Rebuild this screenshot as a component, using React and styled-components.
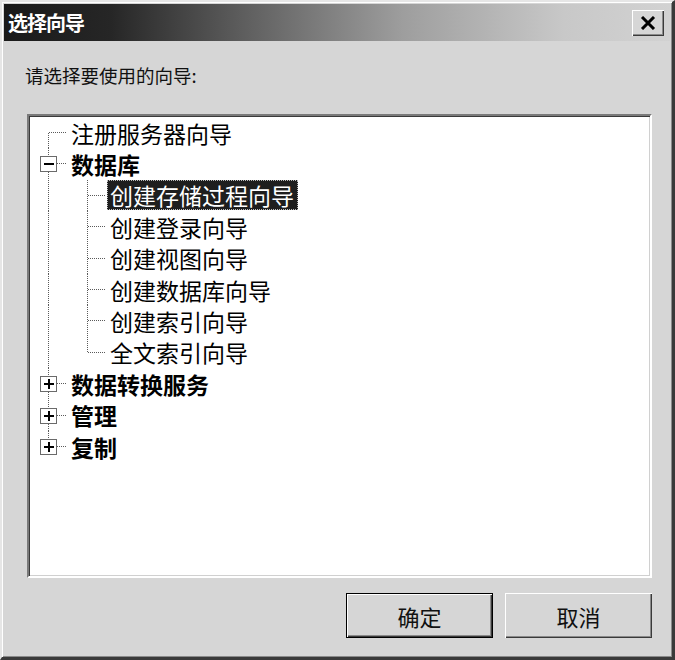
import React from 'react';
import styled, { createGlobalStyle } from 'styled-components';

const ROW_H = 31.4;
const MID = 15.7;

const treeRows = [
  { label: '注册服务器向导', cells: ['first'] },
  { label: '数据库', bold: true, cells: ['tee'], box: 'minus' },
  { label: '创建存储过程向导', cells: ['pipe', 'tee'], selected: true },
  { label: '创建登录向导', cells: ['pipe', 'tee'] },
  { label: '创建视图向导', cells: ['pipe', 'tee'] },
  { label: '创建数据库向导', cells: ['pipe', 'tee'] },
  { label: '创建索引向导', cells: ['pipe', 'tee'] },
  { label: '全文索引向导', cells: ['pipe', 'ell'] },
  { label: '数据转换服务', bold: true, cells: ['tee'], box: 'plus' },
  { label: '管理', bold: true, cells: ['tee'], box: 'plus' },
  { label: '复制', bold: true, cells: ['ell'], box: 'plus' },
];

const Connector = ({ kind, box }) => {
  const top = kind === 'first' ? MID : 0;
  const bottom = kind === 'ell' ? MID : ROW_H;
  return (
    <Gutter width="39" height={ROW_H} shapeRendering="crispEdges">
      <line x1="19.5" x2="19.5" y1={top} y2={bottom} stroke="#5a5a5a" strokeDasharray="1 1" />
      {kind !== 'pipe' && (
        <line x1="20" x2="38" y1={MID} y2={MID} stroke="#5a5a5a" strokeDasharray="1 1" />
      )}
      {box && (
        <g>
          <rect x="11.5" y={MID - 7.5} width="16" height="15" fill="#fff" stroke="#6a6a6a" strokeWidth="1.4" />
          <line x1="14.5" x2="24.5" y1={MID} y2={MID} stroke="#000" strokeWidth="2" />
          {box === 'plus' && (
            <line x1="19.5" x2="19.5" y1={MID - 5} y2={MID + 5} stroke="#000" strokeWidth="2" />
          )}
        </g>
      )}
    </Gutter>
  );
};

const App = () => {
  return (
    <>
      <GlobalStyle />
      <Window>
        <TitleBar>
          <Title>选择向导</Title>
          <CloseButton aria-label="关闭">
            <svg width="16" height="14" viewBox="0 0 16 14">
              <path d="M2 1 L14 13 M14 1 L2 13" stroke="#000" strokeWidth="3" />
            </svg>
          </CloseButton>
        </TitleBar>
        <Body>
          <Prompt>请选择要使用的向导:</Prompt>
          <TreeBox>
            {treeRows.map((row) => (
              <Row key={row.label}>
                {row.cells.map((c, i) => (
                  <Connector key={i} kind={c} box={i === 0 ? row.box : undefined} />
                ))}
                <Label $bold={row.bold} $selected={row.selected}>{row.label}</Label>
              </Row>
            ))}
          </TreeBox>
          <Footer>
            <Button $default>确定</Button>
            <Button>取消</Button>
          </Footer>
        </Body>
      </Window>
    </>
  );
};

export default App;

const GlobalStyle = createGlobalStyle`
  html, body {
    margin: 0;
    padding: 0;
    background: #d6d6d6;
  }
  body {
    font-family: "Noto Sans CJK SC", "Noto Sans", sans-serif;
  }
`;

const Window = styled.div`
  box-sizing: border-box;
  width: 675px;
  height: 660px;
  padding: 2px;
  background: #d6d6d6;
  border-style: solid;
  border-width: 2px 3px 3px 2px;
  border-color: #e6e6e6 #3a3a3a #3a3a3a #e6e6e6;
  box-shadow: inset 1px 1px 0 #ffffff, inset -1px -1px 0 #8a8a8a;
  display: flex;
  flex-direction: column;
`;

const TitleBar = styled.div`
  height: 37px;
  display: flex;
  align-items: center;
  justify-content: space-between;
  padding: 0 6px 0 4px;
  background: linear-gradient(
    to right,
    #1a1a1a 0%,
    #262626 16%,
    #5e5e5e 36%,
    #9e9e9e 60%,
    #c8c8c8 84%,
    #d2d2d2 100%
  );
`;

const Title = styled.span`
  color: #fff;
  font-size: 20px;
  font-weight: 700;
  letter-spacing: -1px;
  line-height: 24px;
`;

const CloseButton = styled.button`
  width: 32px;
  height: 26px;
  padding: 0;
  border: none;
  background: #d6d6d6;
  display: flex;
  align-items: center;
  justify-content: center;
  box-shadow: inset 1px 1px 0 #fff, inset -1px -1px 0 #3a3a3a, inset -2px -2px 0 #8a8a8a;
`;

const Body = styled.div`
  flex: 1;
  display: flex;
  flex-direction: column;
  padding: 0 18px 0 23px;
`;

const Prompt = styled.div`
  margin: 22px 0 27px -2px;
  font-size: 18.5px;
  line-height: 24px;
  color: #111;
`;

const TreeBox = styled.div`
  box-sizing: border-box;
  height: 464px;
  padding-top: 1px;
  background: #fff;
  border-style: solid;
  border-width: 2px;
  border-color: #7a7a7a #ffffff #ffffff #7a7a7a;
  box-shadow: inset 1px 1px 0 #3a3a3a, inset -1px -1px 0 #d0d0d0;
  overflow: hidden;
`;

const Row = styled.div`
  display: flex;
  align-items: center;
  height: ${ROW_H}px;
`;

const Gutter = styled.svg`
  flex: none;
  display: block;
`;

const Label = styled.span`
  font-size: 23px;
  line-height: 28px;
  padding: 1px 4px 1px 3px;
  white-space: nowrap;
  font-weight: ${(p) => (p.$bold ? 700 : 400)};
  color: ${(p) => (p.$selected ? '#fff' : '#000')};
  background: ${(p) => (p.$selected ? '#1e1e1e' : 'transparent')};
  outline: ${(p) => (p.$selected ? '1px dotted #bbb' : 'none')};
  outline-offset: -1px;
`;

const Footer = styled.div`
  display: flex;
  justify-content: flex-end;
  gap: 12px;
  margin-top: 15px;
`;

const Button = styled.button`
  width: 147px;
  height: 45px;
  padding: 0;
  border: none;
  background: #d6d6d6;
  color: #111;
  font-family: inherit;
  font-size: 22px;
  box-shadow: ${(p) =>
    p.$default
      ? 'inset 0 0 0 1px #000, inset 2px 2px 0 #fff, inset -2px -2px 0 #3a3a3a, inset -3px -3px 0 #8a8a8a'
      : 'inset 1px 1px 0 #fff, inset -1px -1px 0 #3a3a3a, inset -2px -2px 0 #8a8a8a'};
`;
